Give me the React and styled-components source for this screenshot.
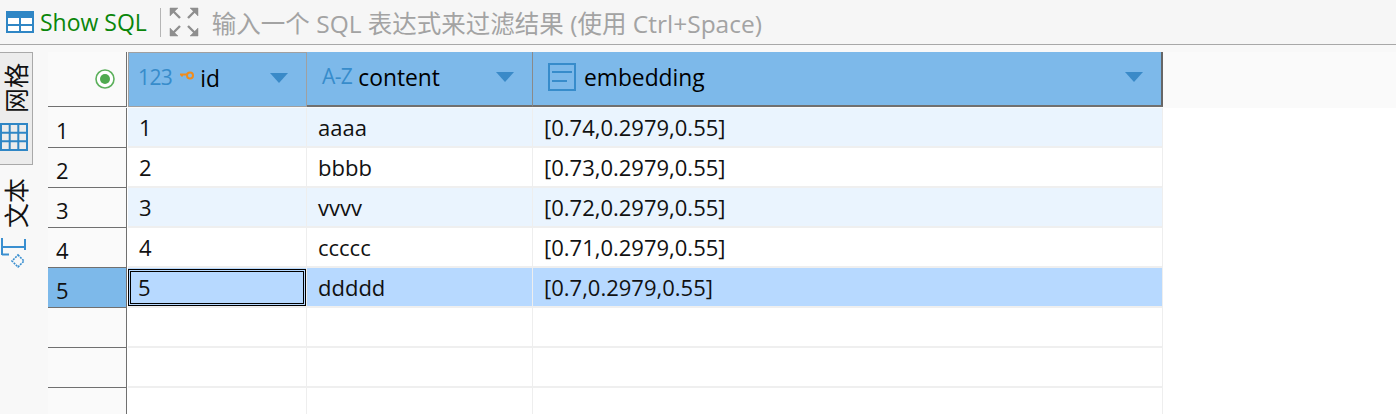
import React from "react";
import styled, { createGlobalStyle } from "styled-components";

const GlobalStyle = createGlobalStyle`
  html, body {
    margin: 0;
    padding: 0;
    background: #fff;
    overflow: hidden;
  }
  body {
    font-family: "Open Sans", "Noto Sans", "Noto Sans CJK SC", sans-serif;
  }
`;

const rows = [
  { id: "1", content: "aaaa", embedding: "[0.74,0.2979,0.55]" },
  { id: "2", content: "bbbb", embedding: "[0.73,0.2979,0.55]" },
  { id: "3", content: "vvvv", embedding: "[0.72,0.2979,0.55]" },
  { id: "4", content: "ccccc", embedding: "[0.71,0.2979,0.55]" },
  { id: "5", content: "ddddd", embedding: "[0.7,0.2979,0.55]", selected: true },
];

const columns = [
  { key: "id", label: "id", width: 179, type: "num" },
  { key: "content", label: "content", width: 226, type: "alpha" },
  { key: "embedding", label: "embedding", width: 630, type: "doc" },
];

const TableIcon = () => (
  <svg width="28" height="22" viewBox="0 0 28 22">
    <path d="M0 0h28v22H0z" fill="#2f86c5" />
    <path d="M2 7h11v6H2zM15 7h11v6H15zM2 15h11v5H2zM15 15h11v5H15z" fill="#fff" />
  </svg>
);

const ExpandIcon = () => (
  <svg width="30" height="30" viewBox="0 0 30 30" fill="#8f8f8f" stroke="#8f8f8f">
    <path d="M1 1h8L1 9zM29 1h-8l8 8zM1 29h8l-8-8zM29 29h-8l8-8z" strokeWidth="0.5" />
    <path d="M4 4l7 7M26 4l-7 7M4 26l7-7M26 26l-7-7" strokeWidth="2.4" fill="none" />
  </svg>
);

const GridIcon = () => (
  <svg width="28" height="28" viewBox="0 0 28 28" fill="none" stroke="#2f86c5" strokeWidth="2">
    <path d="M1 1h26v26H1zM1 9.7h26M1 18.3h26M9.7 1v26M18.3 1v26" />
  </svg>
);

const TextIcon = () => (
  <svg width="26" height="30" viewBox="0 0 26 30" fill="none">
    <path d="M1 0v17M1 9h23M24 1v11M1 16.5h7" stroke="#3a8fd0" strokeWidth="2" />
    <path d="M17 17l6 6-6 6-6-6z" stroke="#3a8fd0" strokeWidth="1.6" strokeDasharray="2 1" />
  </svg>
);

const StatusIcon = () => (
  <svg width="20" height="20" viewBox="0 0 20 20">
    <circle cx="10" cy="10" r="9" fill="#fff" stroke="#5cb05c" strokeWidth="1.6" />
    <circle cx="10" cy="10" r="5" fill="#4faa4f" />
  </svg>
);

const KeyIcon = () => (
  <svg width="14" height="9" viewBox="0 0 14 9" fill="none" stroke="#f08c1e" strokeWidth="2">
    <circle cx="10" cy="4.5" r="3" />
    <path d="M0 3.5h7M2 3.5v2" />
  </svg>
);

const DocIcon = () => (
  <svg width="28" height="28" viewBox="0 0 28 28" fill="none" stroke="#378ccb" strokeWidth="2">
    <path d="M1 1h26v26H1zM4 9h20M4 18h15" />
  </svg>
);

const SortArrow = () => (
  <svg width="18" height="10" viewBox="0 0 18 10">
    <path d="M0 0h18l-9 10z" fill="#3a8ac8" />
  </svg>
);

const ColumnIcon = ({ type }) => {
  if (type === "num") {
    return (
      <>
        <TypeLabel>123</TypeLabel>
        <KeyWrap>
          <KeyIcon />
        </KeyWrap>
      </>
    );
  }
  if (type === "alpha") return <TypeLabel>A-Z</TypeLabel>;
  return (
    <DocWrap>
      <DocIcon />
    </DocWrap>
  );
};

export default function App() {
  return (
    <Page>
      <GlobalStyle />
      <Toolbar>
        <ShowSql>
          <TableIcon />
          Show SQL
        </ShowSql>
        <ToolSep />
        <ExpandIcon />
        <FilterText>输入一个 SQL 表达式来过滤结果 (使用 Ctrl+Space)</FilterText>
      </Toolbar>
      <Body>
        <SideBar>
          <SideTab $active>
            <SideLabel>网格</SideLabel>
            <GridIcon />
          </SideTab>
          <SideTab>
            <SideLabel>文本</SideLabel>
            <TextIcon />
          </SideTab>
        </SideBar>
        <Grid>
          <HeaderRow>
            <Corner>
              <StatusIcon />
            </Corner>
            {columns.map((col) => (
              <HeaderCell key={col.key} $width={col.width} $first={col.key === "id"} $last={col.key === "embedding"}>
                <ColumnIcon type={col.type} />
                <HeaderLabel>{col.label}</HeaderLabel>
                <ArrowWrap>
                  <SortArrow />
                </ArrowWrap>
              </HeaderCell>
            ))}
          </HeaderRow>
          {rows.map((row, i) => (
            <Row key={row.id}>
              <RowNum $selected={row.selected}>{i + 1}</RowNum>
              {columns.map((col) => (
                <Cell
                  key={col.key}
                  $width={col.width}
                  $odd={i % 2 === 0}
                  $selected={row.selected}
                  $focused={row.selected && col.key === "id"}
                >
                  {row.selected && col.key === "id" ? <FocusBox>{row.id}</FocusBox> : row[col.key]}
                </Cell>
              ))}
            </Row>
          ))}
          {[0, 1, 2].map((n) => (
            <Row key={n}>
              <RowNum />
              {columns.map((col) => (
                <Cell key={col.key} $width={col.width} />
              ))}
            </Row>
          ))}
        </Grid>
      </Body>
    </Page>
  );
}

const Page = styled.div`
  width: 1396px;
  height: 414px;
  overflow: hidden;
  background: #fff;
`;

const Toolbar = styled.div`
  height: 44px;
  display: flex;
  align-items: center;
  padding-left: 6px;
  background: #f6f6f6;
  border-bottom: 1px solid #a8a8a8;
`;

const ShowSql = styled.div`
  display: flex;
  align-items: center;
  gap: 6px;
  color: #0a860a;
  font-size: 23px;
`;

const ToolSep = styled.div`
  width: 1px;
  height: 29px;
  background: #b5b5b5;
  margin: 0 8px 0 13px;
`;

const FilterText = styled.div`
  margin-left: 13px;
  font-size: 24.5px;
  color: #a3a3a3;
  white-space: nowrap;
`;

const Body = styled.div`
  display: flex;
  height: 369px;
  background: #f8f8f8;
`;

const SideBar = styled.div`
  width: 48px;
  flex: none;
  padding-top: 7px;
  display: flex;
  flex-direction: column;
  align-items: flex-start;
  gap: 2px;
`;

const SideTab = styled.div`
  width: 33px;
  box-sizing: border-box;
  display: flex;
  flex-direction: column;
  align-items: center;
  gap: 10px;
  padding: 10px 4px 0 0;
  background: ${(p) => (p.$active ? "#ececec" : "transparent")};
  border: 1px solid ${(p) => (p.$active ? "#a9a9a9" : "transparent")};
  border-left: none;
  height: ${(p) => (p.$active ? "113px" : "auto")};
`;

const SideLabel = styled.div`
  writing-mode: sideways-lr;
  font-size: 25px;
  line-height: 28px;
  margin-left: 5px;
  font-family: "Liberation Sans", "Noto Sans CJK SC", sans-serif;
  color: #111;
`;

const Grid = styled.div`
  flex: 1;
  margin-top: 7px;
  background: #fff;
  font-size: 22px;
  color: #111;
`;

const HeaderRow = styled.div`
  display: flex;
  height: 56px;
  background: #fafafa;
`;

const Corner = styled.div`
  width: 79px;
  height: 55px;
  flex: none;
  display: flex;
  align-items: center;
  justify-content: flex-end;
  padding-right: 11px;
  box-sizing: border-box;
  border-bottom: 1px solid #707070;
  border-right: 1px solid #707070;
`;

const HeaderCell = styled.div`
  width: ${(p) => p.$width}px;
  flex: none;
  height: 55px;
  box-sizing: border-box;
  margin-left: ${(p) => (p.$first ? "1px" : "0")};
  display: flex;
  align-items: center;
  padding-left: ${(p) => (p.$first ? "9px" : "15px")};
  position: relative;
  background: #7db9ea;
  border-right: ${(p) => (p.$last ? "2px solid #666" : p.$first ? "1px solid #a0a0a0" : "1px solid #8a8a8a")};
  border-bottom: ${(p) => (p.$first ? "1px solid #a0a0a0" : "2px solid #707070")};
  border-top: ${(p) => (p.$first ? "1px solid #a0a0a0" : "none")};
  border-left: ${(p) => (p.$first ? "1px solid #a0a0a0" : "none")};
`;

const TypeLabel = styled.span`
  color: #378ccb;
  font-size: 21px;
  letter-spacing: -0.6px;
  margin: -5px 6px 0 0;
`;

const DocWrap = styled.span`
  display: flex;
  margin: -3px 8px 0 0;
`;

const KeyWrap = styled.span`
  display: flex;
  margin: -8px 6px 0 2px;
`;

const HeaderLabel = styled.span`
  color: #000;
  font-size: 22.8px;
  margin-top: -2px;
`;

const ArrowWrap = styled.span`
  position: absolute;
  right: 18px;
  top: 20px;
  display: flex;
`;

const Row = styled.div`
  display: flex;
  height: 40px;
`;

const RowNum = styled.div`
  width: 79px;
  flex: none;
  box-sizing: border-box;
  padding-left: 8px;
  padding-top: 7px;
  background: ${(p) => (p.$selected ? "#7db9ea" : "#fafafa")};
  border-right: 1px solid #707070;
  border-bottom: 1px solid #707070;
  margin-right: 1px;
`;

const Cell = styled.div`
  width: ${(p) => p.$width}px;
  flex: none;
  box-sizing: border-box;
  padding: ${(p) => (p.$focused ? "0" : "4px 0 0 11px")};
  background: ${(p) => (p.$selected ? "#b7d9ff" : p.$odd ? "#eaf4fe" : "#fff")};
  border-right: 1px solid #eeeeee;
  border-bottom: 2px solid #efefef;
`;

const FocusBox = styled.div`
  height: 37px;
  box-sizing: border-box;
  padding: 2px 0 0 9px;
  margin-top: 1px;
  border: 1px solid #000;
  outline: 1px solid #000;
  outline-offset: -3px;
`;
